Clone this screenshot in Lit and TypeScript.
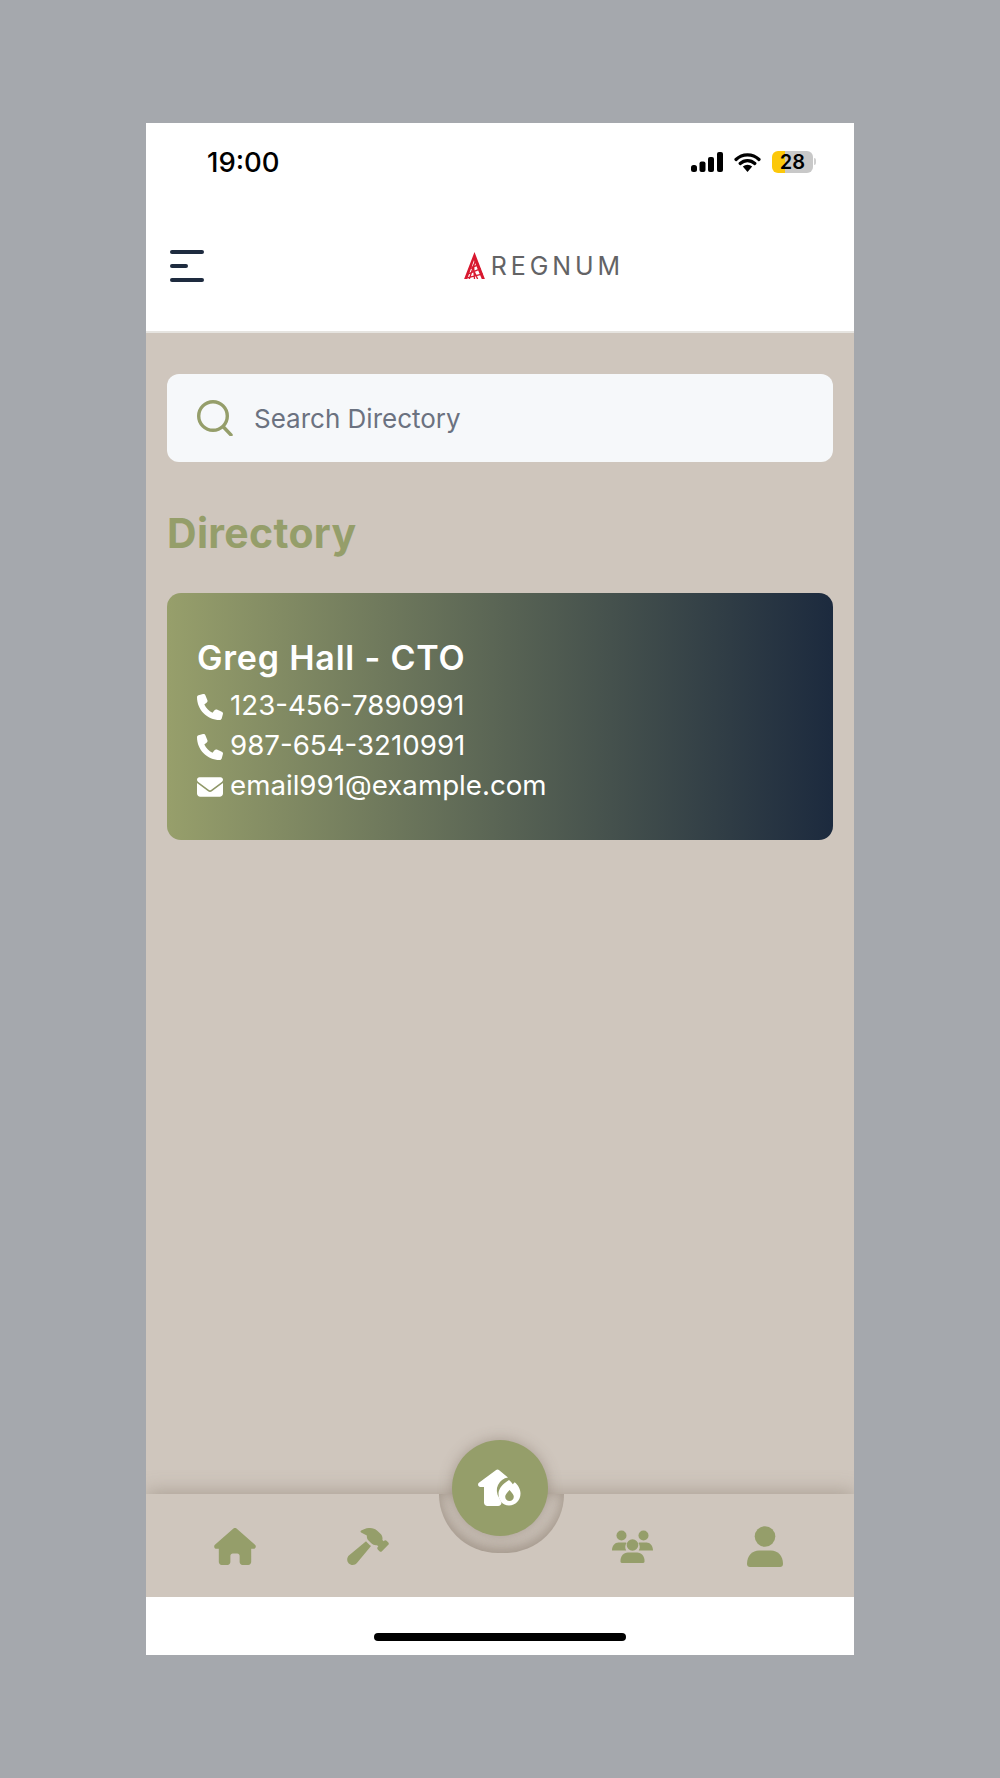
import { LitElement, html, css, svg } from "lit";
import { customElement } from "lit/decorators.js";

const PHONE = svg`<path d="M164.9 24.6c-7.7-18.6-28-28.5-47.4-23.2l-88 24C12.1 30.2 0 46 0 64C0 311.4 200.6 512 448 512c18 0 33.8-12.1 38.6-29.5l24-88c5.3-19.4-4.6-39.7-23.2-47.4l-96-40c-16.3-6.8-35.2-2.1-46.3 11.6L304.7 368C234.3 334.7 177.3 277.7 144 207.3L193.3 167c13.7-11.2 18.4-30 11.6-46.3l-40-96z"/>`;
const MAIL = svg`<path d="M48 64C21.5 64 0 85.5 0 112c0 15.1 7.1 29.3 19.2 38.4L236.8 313.6c11.4 8.5 27 8.5 38.4 0L492.8 150.4c12.1-9.1 19.2-23.3 19.2-38.4c0-26.5-21.5-48-48-48H48zM0 176V384c0 35.3 28.7 64 64 64H448c35.3 0 64-28.7 64-64V176L294.4 339.2c-22.8 17.1-54 17.1-76.8 0L0 176z"/>`;

@customElement("app-root")
export class AppRoot extends LitElement {
  static styles = css`
    :host { display: block; width: 1000px; height: 1778px; background: #a5a8ad; font-family: Inter, "Liberation Sans", sans-serif; }
    .page { height: 1778px; padding-top: 123px; box-sizing: border-box; display: flex; justify-content: center; }
    .phone { width: 708px; height: 1532px; background: #fff; display: flex; flex-direction: column; overflow: hidden; }
    .status { height: 76px; flex: none; display: flex; align-items: center; justify-content: space-between; padding: 1px 38px 0 61px; box-sizing: border-box; }
    .time { font-size: 27.5px; font-weight: 500; color: #000; }
    .sys { display: flex; align-items: center; gap: 11px; }
    .batt { display: flex; align-items: center; gap: 1px; }
    .battery { width: 41px; height: 22px; border-radius: 6px; background: linear-gradient(90deg, #fcc80a 0 13px, #c8c8c8 13px); display: flex; align-items: center; justify-content: center; font-size: 20px; font-weight: 600; color: #000; }
    .nub { width: 2px; height: 7px; border-radius: 0 2px 2px 0; background: #d0d0d0; }
    .header { height: 132px; flex: none; border-bottom: 2px solid #e6e4e0; display: flex; align-items: center; justify-content: space-between; padding: 0 24px; }
    .menu { display: flex; flex-direction: column; gap: 10px; width: 34px; margin-top: 2px; }
    .menu span { display: block; height: 4px; border-radius: 2px; background: #1e2b3f; }
    .menu span:nth-child(2) { width: 18px; }
    .logo { display: flex; align-items: center; gap: 6px; margin-right: 206px; }
    .logotext { font-family: Inter, sans-serif; font-size: 25px; font-weight: 400; letter-spacing: 3.900px; color: #636365; line-height: 1; margin-top: 3px; }
    .content { flex: 1; background: #cfc6bd; padding: 41px 21px 0; display: flex; flex-direction: column; min-height: 0; }
    .search { height: 88px; background: #f6f8fa; border-radius: 12px; display: flex; align-items: center; gap: 22px; padding: 0 30px; box-sizing: border-box; flex: none; }
    .search span { font-size: 26px; color: #6b7280; margin: 1px 0 0 -1px; }
    h1 { margin: 48px 0 36px; font-size: 41px; line-height: 47px; font-weight: 700; color: #959e6a; letter-spacing: 0.3px; }
    .card { height: 247px; flex: none; border-radius: 14px; background: linear-gradient(90deg, #979f6b 0%, #1c2a3e 100%); padding: 45px 30px 0; box-sizing: border-box; color: #fff; }
    .name { font-size: 34px; font-weight: 600; line-height: 40px; margin-bottom: 7px; letter-spacing: 0.8px; }
    .row { display: flex; align-items: center; gap: 7px; height: 40px; font-size: 27.7px; }
    .row svg { flex: none; width: 26px; height: 26px; fill: #fff; margin-top: 4px; }
    .nav { height: 103px; flex: none; background: #cfc6bd; position: relative; box-shadow: 0 -2px 18px rgba(120, 105, 90, 0.42); display: grid; grid-template-columns: repeat(5, 1fr); padding: 0 23px; align-items: center; }
    .item { display: flex; justify-content: center; fill: #959e6a; margin-top: 2px; }
    .notch { position: absolute; left: 293px; top: 0; width: 125px; height: 59px; border-radius: 0 0 63px 63px; background: #cfc6bd; box-shadow: inset 0 -4px 16px rgba(120, 105, 90, 0.6); }
    .fab { position: absolute; left: 306px; top: -54px; width: 96px; height: 96px; border-radius: 50%; background: #959e6a; display: flex; align-items: center; justify-content: center; box-shadow: 0 0 14px rgba(120, 105, 90, 0.45); }
    .bottom { height: 58px; flex: none; position: relative; background: #fff; display: flex; justify-content: center; padding-top: 36px; box-sizing: border-box; }
    .bar { width: 252px; height: 8px; border-radius: 4px; background: #000; }
  `;

  render() {
    return html`<div class="page"><div class="phone">
      <div class="status">
        <span class="time">19:00</span>
        <div class="sys">
          <svg width="32" height="20" viewBox="0 0 32 20" fill="#000"><rect x="0" y="13" width="6" height="7" rx="2.500"/><rect x="8.500" y="9.500" width="6" height="10.500" rx="2"/><rect x="17" y="5" width="6" height="15" rx="2"/><rect x="26" y="0" width="6" height="20" rx="2"/></svg>
          <svg width="27" height="20" viewBox="0 0 27 20"><path d="M2 7.500a16.500 16.500 0 0 1 23 0M6.200 11.500a10.500 10.500 0 0 1 14.600 0" fill="none" stroke="#000" stroke-width="3.200" stroke-linecap="round"/><path d="M8.800 14.600a7 7 0 0 1 9.400 0L13.500 20z" fill="#000"/></svg>
          <div class="batt"><div class="battery">28</div><div class="nub"></div></div>
        </div>
      </div>
      <div class="header">
        <div class="menu"><span></span><span></span><span></span></div>
        <div class="logo">
          <svg width="21" height="27" viewBox="0 0 20 26"><path d="M10 0 L0 26 H3 L9.500 8 L17 26 H20 Z" fill="#d8182f"/><path d="M6 16 L14 12 M4 21 L16 16 M3 25 L18 21 M7 13 L13 26 M11 8 L5 26 M9 12 L10 26" stroke="#d8182f" stroke-width="1.300" fill="none"/></svg>
          <span class="logotext">REGNUM</span>
        </div>
      </div>
      <div class="content">
        <div class="search">
          <svg width="36" height="36" viewBox="0 0 36 36" fill="none" stroke="#959e6a" stroke-width="3.400" stroke-linecap="round"><circle cx="16" cy="16" r="14.300"/><path d="M26.500 27l7.500 8"/></svg>
          <span>Search Directory</span>
        </div>
        <h1>Directory</h1>
        <div class="card">
          <div class="name">Greg Hall - CTO</div>
          <div class="row"><svg viewBox="0 0 512 512">${PHONE}</svg>123-456-7890991</div>
          <div class="row"><svg viewBox="0 0 512 512">${PHONE}</svg>987-654-3210991</div>
          <div class="row"><svg viewBox="0 0 512 512">${MAIL}</svg>email991@example.com</div>
        </div>
      </div>
      <div class="nav">
        <div class="notch"></div>
        <div class="item"><svg width="42" height="37" viewBox="0 0 576 512"><path d="M575.800 255.500c0 18-15 32.100-32 32.100h-32l.7 160.200c0 2.700-.2 5.400-.5 8.100V472c0 22.100-17.900 40-40 40H456c-1.100 0-2.200 0-3.300-.1c-1.400 .1-2.800 .1-4.200 .1H416 392c-22.100 0-40-17.900-40-40V448 384c0-17.700-14.300-32-32-32H256c-17.700 0-32 14.300-32 32v64 24c0 22.100-17.900 40-40 40H160 128.100c-1.500 0-3-.1-4.500-.2c-1.200 .1-2.400 .2-3.600 .2H104c-22.100 0-40-17.900-40-40V360c0-.9 0-1.900 .1-2.800V287.600H32c-18 0-32-14-32-32.100c0-9 3-17 10-24L266.400 8c7-7 15-8 22-8s15 2 21 7L564.800 231.500c8 7 12 15 11 24z"/></svg></div>
        <div class="item"><svg width="42" height="37" viewBox="0 0 576 512"><path d="M413.500 237.500c-28.200 4.800-58.200-3.600-80-25.400l-38.100-38.100C280.400 159 272 138.800 272 117.600V105.500L192.300 62c-5.300-2.900-8.600-8.600-8.300-14.700s3.900-11.500 9.500-14l47.200-21C259.100 4.200 279 0 299.200 0h18.100c36.700 0 72 14 98.700 39.100l44.600 42c24.200 22.800 33.200 55.700 26.600 86L503 183l8-8c9.400-9.400 24.600-9.400 33.900 0l24 24c9.400 9.400 9.400 24.600 0 33.900l-88 88c-9.400 9.400-24.600 9.400-33.900 0l-24-24c-9.400-9.400-9.400-24.600 0-33.900l8-8-17.500-17.500zM27.400 377.100L260.900 182.600c3.500 4.900 7.500 9.600 11.800 14l38.100 38.100c6 6 12.400 11.200 19.200 15.700L134.900 484.600c-14.500 17.400-36 27.400-58.600 27.400C34.100 512 0 477.800 0 435.700c0-22.600 10.100-44.100 27.400-58.600z"/></svg></div>
        <div></div>
        <div class="item"><svg width="41" height="33" viewBox="0 0 41 33"><circle cx="9.500" cy="5.500" r="5"/><circle cx="31.500" cy="5.500" r="5"/><path d="M0 20.500c0-5 3-8 6.500-8h6c.8 0 1.500.1 2.100.4-1.700 2.200-1.700 5.200-.4 7.600z"/><path d="M41 20.500c0-5-3-8-6.500-8h-6c-.8 0-1.500.1-2.100.4 1.700 2.200 1.700 5.200.4 7.600z"/><circle cx="20.500" cy="15" r="5.800"/><path d="M8.500 31.800c-.4-5.500 3-9.300 7.500-9.300h9c4.500 0 7.900 3.800 7.500 9.300-.1 .7-.6 1.200-1.200 1.200H9.700c-.6 0-1.100-.5-1.200-1.200z"/></svg></div>
        <div class="item"><svg width="36" height="41" viewBox="0 0 36 41"><circle cx="18" cy="10.500" r="10.300"/><path d="M0 38c0-8.500 5.500-13.500 12-13.500h12c6.500 0 12 5 12 13.500 0 1.700-1.300 3-3 3H3c-1.700 0-3-1.300-3-3z"/></svg></div>
        <div class="fab">
          <svg width="44" height="38" viewBox="0 0 44 38" fill="#fff"><path d="M19.500.5c.6 0 1.200.2 1.700.7L30 8.500a13 13 0 0 0-9 20l2.500 5c0 2-1.500 3.500-3.500 3.500H9.500c-2 0-3.500-1.500-3.500-3.500V18H2.500c-2.300 0-3.300-2.800-1.600-4.300L17.800 1.200c.5-.5 1.100-.7 1.700-.7z"/><path fill-rule="evenodd" d="M31 11c1.600 1.400 2.800 2.800 3.800 4.200.6-.7 1.200-1.400 1.900-1.900 3.300 2.800 5.800 6.800 5.800 11.200 0 6.800-5 12-11.500 12S20.500 31.300 20.500 24.500c0-4.700 4.500-10 10.500-13.500zM31.500 21c-2.500 2.800-4.300 4.800-4.300 6.800 0 2.500 1.900 4.200 4.300 4.200s4.300-1.700 4.300-4.200c0-2-1.800-4-4.300-6.800z"/></svg>
        </div>
      </div>
      <div class="bottom"><div class="bar"></div></div>
    </div></div>`;
  }
}
